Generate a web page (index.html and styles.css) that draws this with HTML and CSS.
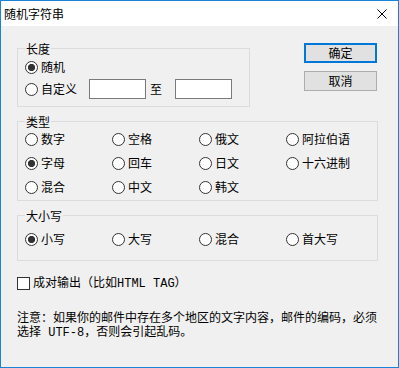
FILE: index.html
```html
<!DOCTYPE html>
<html lang="zh-CN">
<head>
    <meta charset="UTF-8">
    <title>随机字符串</title>
    <link rel="stylesheet" href="styles.css">
</head>
<body>

<div class="window">
    <div class="titlebar">
        <span class="title">随机字符串</span>
        <svg class="close" width="10" height="10" viewBox="0 0 10 10">
            <path d="M0.5 0.5 L9.5 9.5 M9.5 0.5 L0.5 9.5" stroke="#000" stroke-width="1" fill="none"/>
        </svg>
    </div>

    <div class="client">
        <div class="top-row">
            <fieldset class="group group-length">
                <legend>长度</legend>
                <label class="radio"><input type="radio" name="len" checked>随机</label>
                <div class="custom-row">
                    <label class="radio"><input type="radio" name="len">自定义</label>
                    <input type="text" class="edit edit-from">
                    <span class="to">至</span>
                    <input type="text" class="edit">
                </div>
            </fieldset>

            <div class="buttons">
                <button type="button" class="btn btn-default">确定</button>
                <button type="button" class="btn">取消</button>
            </div>
        </div>

        <fieldset class="group group-type">
            <legend>类型</legend>
            <div class="options">
                <label class="radio"><input type="radio" name="type">数字</label>
                <label class="radio"><input type="radio" name="type">空格</label>
                <label class="radio"><input type="radio" name="type">俄文</label>
                <label class="radio"><input type="radio" name="type">阿拉伯语</label>
                <label class="radio"><input type="radio" name="type" checked>字母</label>
                <label class="radio"><input type="radio" name="type">回车</label>
                <label class="radio"><input type="radio" name="type">日文</label>
                <label class="radio"><input type="radio" name="type">十六进制</label>
                <label class="radio"><input type="radio" name="type">混合</label>
                <label class="radio"><input type="radio" name="type">中文</label>
                <label class="radio"><input type="radio" name="type">韩文</label>
            </div>
        </fieldset>

        <fieldset class="group group-case">
            <legend>大小写</legend>
            <div class="options">
                <label class="radio"><input type="radio" name="case" checked>小写</label>
                <label class="radio"><input type="radio" name="case">大写</label>
                <label class="radio"><input type="radio" name="case">混合</label>
                <label class="radio"><input type="radio" name="case">首大写</label>
            </div>
        </fieldset>

        <label class="check"><input type="checkbox">成对输出（比如HTML TAG）</label>

        <p class="note">注意：如果你的邮件中存在多个地区的文字内容，邮件的编码，必须<br>选择 UTF-8，否则会引起乱码。</p>
    </div>
</div>

</body>
</html>
```

FILE: styles.css
```css
body {
    margin: 0;
    padding: 0;
    background: #f0f0f0;
    font-family: "Noto Sans CJK SC", "Noto Sans", sans-serif;
    font-size: 12px;
    color: #000000;
}

.window {
    width: 399px;
    height: 368px;
    box-sizing: border-box;
    border: 1px solid #1883d7;
    background: #f0f0f0;
}

.titlebar {
    height: 25px;
    background: #ffffff;
    display: flex;
    align-items: center;
    justify-content: space-between;
    padding-left: 3px;
    padding-right: 11px;
}

.title {
    line-height: 15px;
}

.close {
    display: block;
}

.client {
    padding: 15px 20px 0 16px;
}

.top-row {
    display: flex;
    align-items: flex-start;
    justify-content: space-between;
}

.group {
    margin: 0;
    padding: 0 7px;
    border: 1px solid #dcdcdc;
    min-inline-size: 0;
}

.group legend {
    padding: 0 1px;
    line-height: 15px;
}

.group-length {
    width: 233px;
    box-sizing: border-box;
    padding-top: 4px;
    padding-bottom: 7px;
}

.group-type {
    margin-top: 7px;
    padding-top: 3px;
    padding-bottom: 6px;
}

.group-case {
    margin-top: 7px;
    padding-top: 9px;
    padding-bottom: 14px;
}

.options {
    display: grid;
    grid-template-columns: repeat(4, 87px);
    row-gap: 10px;
}

.radio {
    display: flex;
    align-items: center;
    gap: 3px;
    height: 14px;
    line-height: 14px;
}

.radio input {
    appearance: none;
    margin: 0;
    width: 13px;
    height: 13px;
    border: 1px solid #333333;
    border-radius: 50%;
    background: #ffffff;
    box-sizing: border-box;
    flex: none;
}

.radio input:checked {
    background: radial-gradient(circle, #333333 3.3px, #ffffff 3.9px);
}

.custom-row {
    display: flex;
    align-items: center;
    margin-top: 5px;
}

.edit {
    width: 57px;
    height: 20px;
    box-sizing: border-box;
    margin: 0;
    padding: 0;
    border: 1px solid #7a7a7a;
    background: #ffffff;
}

.edit-from {
    margin-left: 12px;
}

.to {
    margin-left: 4px;
    margin-right: 13px;
    line-height: 14px;
}

.buttons {
    display: flex;
    flex-direction: column;
    gap: 8px;
    margin-top: 2px;
    margin-right: 1px;
}

.btn {
    width: 73px;
    height: 20px;
    box-sizing: border-box;
    padding: 0;
    background: #e1e1e1;
    border: 1px solid #adadad;
    font-family: "Noto Sans CJK SC", sans-serif;
    font-size: 12px;
    line-height: 14px;
    color: #000000;
}

.btn-default {
    border: 2px solid #0078d7;
}

.check {
    display: flex;
    align-items: center;
    gap: 3px;
    margin-top: 16px;
    height: 13px;
    font-family: "Liberation Mono", "Noto Sans CJK SC", monospace;
    line-height: 14px;
}

.check input {
    appearance: none;
    margin: 0;
    width: 13px;
    height: 13px;
    border: 1px solid #333333;
    background: #ffffff;
    box-sizing: border-box;
    flex: none;
}

.note {
    margin: 22px 0 0 0;
    font-family: "Liberation Mono", "Noto Sans CJK SC", monospace;
    line-height: 14px;
    white-space: nowrap;
}
```
